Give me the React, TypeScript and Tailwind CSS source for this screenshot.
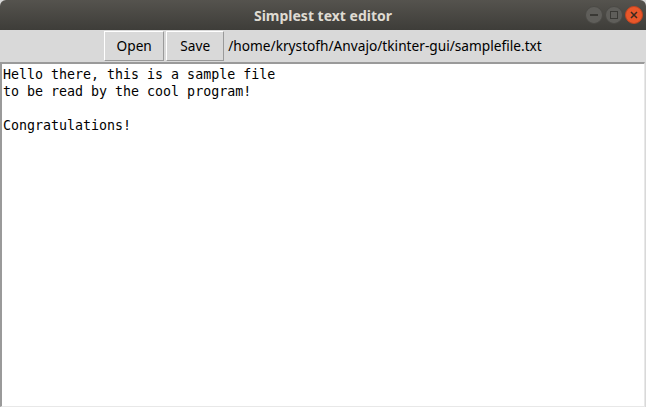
import React from "react";

export default function App() {
  return (
    <div className="w-[646px] h-[407px] flex flex-col bg-[#d9d9d9] overflow-hidden">
      <div className="h-[30px] shrink-0 relative flex items-center justify-center rounded-t-[6px] bg-gradient-to-b from-[#55534e] to-[#3e3d39]">
        <span className="text-[14px] font-bold text-[#dfdbd2] font-['Noto_Sans',sans-serif]">Simplest text editor</span>
        <div className="absolute right-[3px] top-[6px] flex gap-[2px]">
          <div className="w-[18px] h-[18px] rounded-full bg-[#5f5e5a] border border-[#4a4945] flex items-center justify-center">
            <div className="w-[8px] h-[2px] bg-[#3a3935]" />
          </div>
          <div className="w-[18px] h-[18px] rounded-full bg-[#5f5e5a] border border-[#4a4945] flex items-center justify-center">
            <div className="w-[8px] h-[8px] border-[1.5px] border-[#3a3935]" />
          </div>
          <div className="w-[18px] h-[18px] rounded-full bg-[#e9572a] border border-[#c04420] flex items-center justify-center">
            <svg width="8" height="8" viewBox="0 0 8 8">
              <path d="M1 1L7 7M7 1L1 7" stroke="#3a2a20" strokeWidth="1.5" />
            </svg>
          </div>
        </div>
      </div>
      <div className="h-[32px] shrink-0 flex items-start justify-center pt-[1px] font-['Noto_Sans',sans-serif] text-[13.7px] text-black">
        <button className="w-[60px] h-[30px] bg-[#d9d9d9] border border-t-white border-l-white border-b-[#9a9a9a] border-r-[#9a9a9a]">Open</button>
        <button className="ml-[2px] w-[58px] h-[30px] bg-[#d9d9d9] border border-t-white border-l-white border-b-[#9a9a9a] border-r-[#9a9a9a]">Save</button>
        <span className="ml-[4px] leading-[30px]">/home/krystofh/Anvajo/tkinter-gui/samplefile.txt</span>
      </div>
      <div className="flex-1 mr-[1px] bg-white border-t-[2px] border-l-[2px] border-t-[#9a9a9a] border-l-[#9a9a9a] border-r border-r-[#e8e8e8] border-b border-b-[#e8e8e8] pl-[1px] pt-[2px]">
        <pre className="font-['DejaVu_Sans_Mono',monospace] text-[13.3px] leading-[17px] text-black">{`Hello there, this is a sample file
to be read by the cool program!

Congratulations!`}</pre>
      </div>
    </div>
  );
}
